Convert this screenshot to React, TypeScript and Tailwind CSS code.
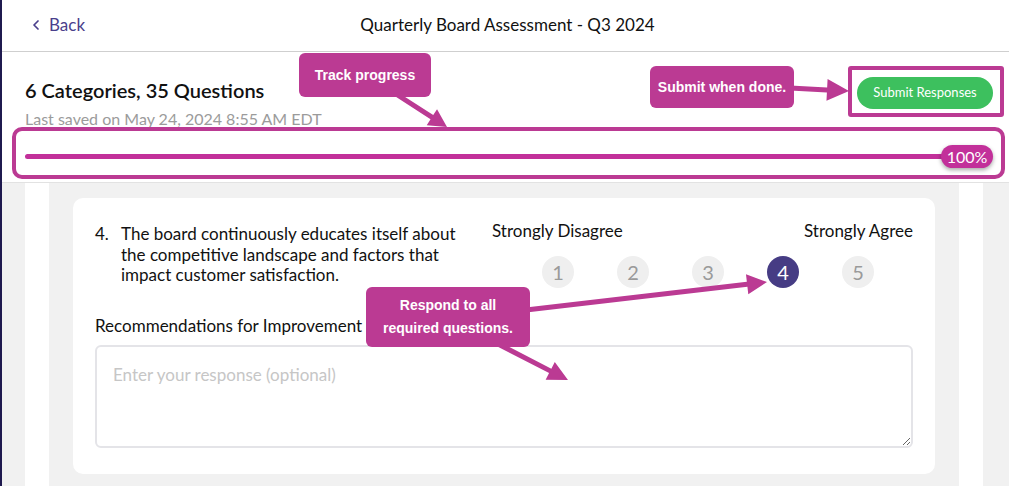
import { ChevronLeft } from "lucide-react";

const MAGENTA = "#bb3a93";

type Pt = [number, number];

// arrow polygon from start to tip, thick shaft + triangular head
function arrowPoints(from: Pt, to: Pt, w = 5, hl = 18, hw = 20) {
  const [x1, y1] = from;
  const [x2, y2] = to;
  const len = Math.hypot(x2 - x1, y2 - y1);
  const ux = (x2 - x1) / len;
  const uy = (y2 - y1) / len;
  const px = -uy;
  const py = ux;
  const bx = x2 - ux * hl;
  const by = y2 - uy * hl;
  const pts: Pt[] = [
    [x1 + (px * w) / 2, y1 + (py * w) / 2],
    [bx + (px * w) / 2, by + (py * w) / 2],
    [bx + (px * hw) / 2, by + (py * hw) / 2],
    [x2, y2],
    [bx - (px * hw) / 2, by - (py * hw) / 2],
    [bx - (px * w) / 2, by - (py * w) / 2],
    [x1 - (px * w) / 2, y1 - (py * w) / 2],
  ];
  return pts.map((p) => p.join(",")).join(" ");
}

const Callout = ({
  className = "",
  children,
}: {
  className?: string;
  children: React.ReactNode;
}) => (
  <div
    className={`absolute flex items-center justify-center rounded-[6px] bg-[#bb3a93] text-center font-['Liberation_Sans',Arial,sans-serif] text-[14px] font-bold leading-[23px] text-white ${className}`}
  >
    {children}
  </div>
);

export default function App() {
  return (
    <div className="relative flex h-[486px] w-[1009px] overflow-hidden bg-white font-['Lato',sans-serif] text-[#1a1a1a]">
      {/* left edge */}
      <div className="w-[2px] shrink-0 bg-[#1f1a4f]" />

      <div className="flex min-w-0 flex-1 flex-col">
        {/* Top bar */}
        <div className="grid h-[52px] shrink-0 grid-cols-[1fr_auto_1fr] items-center border-b border-[#cfcfcf] pb-[2px]">
          <div className="flex items-center gap-[5px] pl-[26px] text-[17px] text-[#4a3f8c]">
            <ChevronLeft size={16} strokeWidth={2.6} />
            <span>Back</span>
          </div>
          <div className="pl-[4px] text-[17px] text-[#111]">
            Quarterly Board Assessment - Q3 2024
          </div>
          <div />
        </div>

        {/* Summary */}
        <div className="shrink-0 border-b border-[#e2e2e2] pb-[14px] pl-[23px] pr-[16px] pt-[24px]">
          <div className="flex items-start justify-between">
            <div>
              <div className="text-[20px] font-semibold leading-[28px] text-[#111]">
                6 Categories, 35 Questions
              </div>
              <div className="mt-[3px] text-[16px] leading-[24px] text-[#9b9b9b]">
                Last saved on May 24, 2024 8:55 AM EDT
              </div>
            </div>
            <button className="mt-[1px] h-[32px] w-[136px] rounded-full bg-[#3dc05e] text-[13px] text-white">
              Submit Responses
            </button>
          </div>
          <div className="mt-[14px] flex h-[23px] items-center">
            <div className="h-[5px] flex-1 rounded-full bg-[#c2309a]" />
            <div className="-ml-[6px] flex h-[23px] w-[52px] items-center justify-center rounded-full bg-[#c2309a] text-[16px] text-white shadow-[0_2px_4px_rgba(0,0,0,0.35)]">
              100%
            </div>
          </div>
        </div>

        {/* Content area */}
        <div className="flex-1 bg-[#f1f1f1] pl-[23px]">
          <div className="h-full w-[958px] bg-white px-[24px]">
            <div className="h-full bg-[#f1f1f1] px-[24px] pt-[15px]">
              <div className="h-[276px] rounded-[10px] bg-white px-[22px] pt-[23px]">
                <div className="flex justify-between">
                  <div className="mt-[3px] flex text-[17px] leading-[20.5px] text-[#111]">
                    <span className="w-[26px]">4.</span>
                    <span className="w-[345px]">
                      The board continuously educates itself about the
                      competitive landscape and factors that impact customer
                      satisfaction.
                    </span>
                  </div>
                  <div className="w-[421px]">
                    <div className="flex justify-between text-[17px] leading-[20px] text-[#111]">
                      <span>Strongly Disagree</span>
                      <span>Strongly Agree</span>
                    </div>
                    <div className="ml-[50px] mt-[15px] flex gap-[43px]">
                      {[1, 2, 3, 4, 5].map((n) => (
                        <div
                          key={n}
                          className={`flex h-[32px] w-[32px] items-center justify-center rounded-full text-[20px] ${
                            n === 4
                              ? "bg-[#463c84] text-white"
                              : "bg-[#efefef] text-[#9a9a9a]"
                          }`}
                        >
                          {n}
                        </div>
                      ))}
                    </div>
                  </div>
                </div>

                <div className="mt-[28px] text-[17px] leading-[20px] text-[#111]">
                  Recommendations for Improvement
                </div>
                <textarea
                  className="mt-[9px] block h-[103px] w-full rounded-[6px] border-2 border-[#e4e4e8] px-[16px] py-[18px] text-[17px] leading-[20px] outline-none placeholder:text-[#c6c6c6]"
                  placeholder="Enter your response (optional)"
                />
              </div>
            </div>
          </div>
        </div>
      </div>

      {/* Annotation overlays */}
      <div className="absolute left-[12px] top-[127px] h-[52px] w-[993px] rounded-[10px] border-4 border-[#bb3a93]" />
      <div className="absolute left-[848px] top-[66px] h-[51px] w-[156px] rounded-[3px] border-4 border-[#bb3a93]" />

      <svg
        className="pointer-events-none absolute left-0 top-0"
        width={1009}
        height={486}
      >
        <polygon fill={MAGENTA} points={arrowPoints([396, 94], [447, 127], 5, 18, 19)} />
        <polygon fill={MAGENTA} points={arrowPoints([790, 88], [849, 91], 5, 22, 22)} />
        <polygon fill={MAGENTA} points={arrowPoints([526, 310], [767, 282], 5, 20, 20)} />
        <polygon fill={MAGENTA} points={arrowPoints([498, 344], [568, 380], 5, 20, 20)} />
      </svg>

      <Callout className="left-[299px] top-[53px] h-[44px] w-[132px]">
        Track progress
      </Callout>
      <Callout className="left-[650px] top-[66px] h-[42px] w-[144px]">
        Submit when done.
      </Callout>
      <Callout className="left-[366px] top-[287px] h-[60px] w-[164px]">
        Respond to all
        <br />
        required questions.
      </Callout>
    </div>
  );
}
